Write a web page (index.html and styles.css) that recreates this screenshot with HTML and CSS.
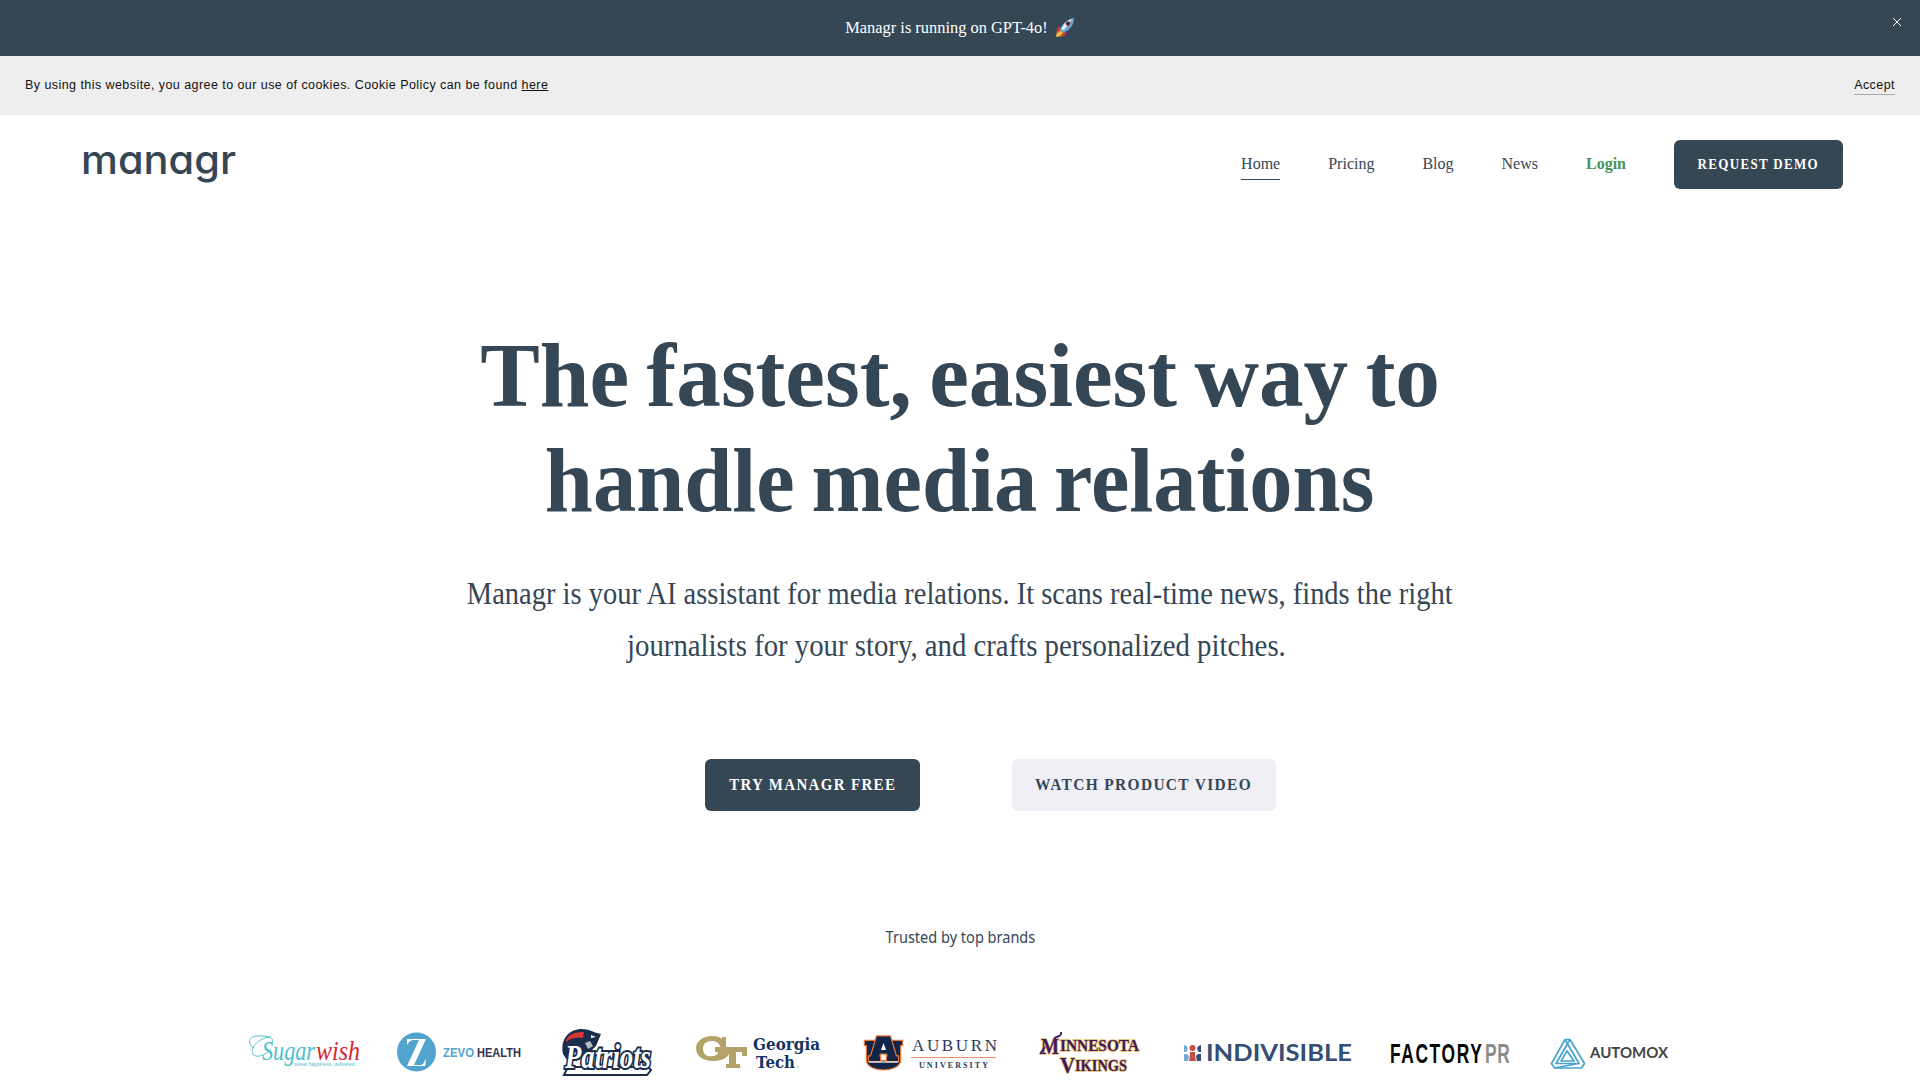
FILE: index.html
```html
<!DOCTYPE html>
<html lang="en">
<head>
<meta charset="utf-8">
<title>Managr</title>
<link rel="stylesheet" href="styles.css">
</head>
<body>
<div class="announce"><span class="announce-text">Managr is running on GPT-4o!</span>
  <svg class="rocket" width="20" height="20" viewBox="0 0 20 20"><path d="M5 8 1 11l4 1zM9 14l-1 5 4-4z" fill="#d8352a"/><path d="M1 19l1-5 3-2 3 3-2 3z" fill="#f7c23c"/><path d="M1 14l3-3 2 1-3 3zM5 18l3-4 1 2-2 3z" fill="#e5482d"/><path d="M5 12C7 6 12 1 19 0c0 7-4 12-11 15z" fill="#6fa5cc"/><path d="M6 11C9 5 13 2 17 1l-8 11z" fill="#e4edf2"/><circle cx="13" cy="5.500" r="2.200" fill="#8e2d27"/><circle cx="13" cy="5.500" r="1.200" fill="#26303a"/></svg>
  <svg class="close" width="10" height="10" viewBox="0 0 10 10"><path d="M1 1l8 8M9 1L1 9" stroke="#fff" stroke-width="1" fill="none"/></svg>
</div>
<div class="cookie"><span>By using this website, you agree to our use of cookies. Cookie Policy can be found <a class="here">here</a></span><a class="accept">Accept</a></div>
<header class="header">
  <svg class="logo" width="160" height="64" viewBox="80 132 160 64"><text class="logo-text" x="81" y="174" textLength="155" lengthAdjust="spacingAndGlyphs">managr</text></svg>
  <nav class="nav"><a class="link active">Home</a><a class="link">Pricing</a><a class="link">Blog</a><a class="link">News</a><a class="link login">Login</a><a class="btn demo"><span>REQUEST DEMO</span></a></nav>
</header>
<main>
  <h1><span class="l1">The fastest, easiest way to</span><span class="l2">handle media relations</span></h1>
  <p class="lead"><span class="p1">Managr is your AI assistant for media relations. It scans real-time news, finds the right</span><span class="p2">journalists for your story, and crafts personalized pitches.</span></p>
  <div class="actions"><a class="btn try"><span>TRY MANAGR FREE</span></a><a class="btn watch"><span>WATCH PRODUCT VIDEO</span></a></div>
  <p class="trusted"><span>Trusted by top brands</span></p>
  <div class="brands">
    <svg width="122" height="55" viewBox="244 1025 122 55"><path d="M272 1043c3-7-7-7-15-7-10 0-9 10-3 12M271 1037c-10 0-22 10-18 17 3 5 13 1 18-5" fill="none" stroke="#4fc0ca"/><text class="script teal" x="262" y="1060" font-size="28" textLength="53" lengthAdjust="spacingAndGlyphs">Sugar</text><text class="script red" x="316" y="1060" font-size="27" textLength="44" lengthAdjust="spacingAndGlyphs">wish</text><text class="sans teal" x="294" y="1065.500" font-size="5" textLength="62">sweet happiness, delivered.</text></svg>
    <svg width="130" height="55" viewBox="396 1025 130 55"><circle cx="416.500" cy="1052" r="19.500" fill="#51a4ce"/><path d="M407 1044v-5h19l-12 26h6c3 0 4-2 5-5h1l-1 6h-18l12-26h-5c-3 0-5 1-6 4z" fill="#fff"/><text class="sans bold" x="443" y="1056.500" font-size="12" textLength="31" lengthAdjust="spacingAndGlyphs" fill="#51a4ce">ZEVO</text><text class="sans bold" x="477" y="1056.500" font-size="12" textLength="44" lengthAdjust="spacingAndGlyphs" fill="#31324e">HEALTH</text></svg>
    <svg width="102" height="55" viewBox="556 1025 102 55"><path d="M563 1054c-3-15 6-25 19-25 7 0 10 3 19 5l-5 12-8 8-16-2-5 8z" fill="#1c2d4b"/><path d="M566 1040c3-6 9-8 18-8l-1 6c-8-1-13 0-17 4z" fill="#da3535"/><path d="M585 1043l5-2 3 5-5 3z" fill="#b8c0c7"/><path d="M591 1035l5 2-5 1z" fill="#fff"/><path d="M568 1067h80l3 3-4 5h-83z" fill="#fff" stroke="#1c2d4b" stroke-width="2"/><text class="patriots" x="565" y="1068" font-size="34" textLength="86" lengthAdjust="spacingAndGlyphs">Patriots</text></svg>
    <svg width="136" height="55" viewBox="688 1025 136 55"><path d="M722 1037h4v12h-5c-1-6-5-8-9-8-7 0-9 4-9 8 0 6 5 8 9 7 4 0 6-2 6-4h-3v-5h32v9h-5v-4h-6v12h4v4h-14v-4h3v-10c-3 5-9 7-16 7-10 0-17-5-17-13 0-7 7-12 16-12 5 0 8 1 10 3z" fill="#b3a369"/><circle cx="741" cy="1067" r=".6" fill="#b3a369"/><text class="slab" x="753" y="1050" font-size="17" textLength="67" lengthAdjust="spacingAndGlyphs">Georgia</text><text class="slab" x="756" y="1067.500" font-size="17" textLength="39" lengthAdjust="spacingAndGlyphs">Tech</text><circle cx="798" cy="1067" r=".6" fill="#153360"/></svg>
    <svg width="148" height="55" viewBox="854 1025 148 55"><g stroke="#e5783d" stroke-width="2.500" fill="#102548" paint-order="stroke"><path d="M865 1041h11v4h-2v16h19v-16h-2v-4h11v4h-2v16c-2 11-31 11-33 0v-16h-2z"/><path d="M877 1036.500h13l6 20h2v4.500h-11v-4.500h1l-1-3h-7l-1 3h1v4.500h-11v-4.500h2z"/></g><path d="M869 1062h29" stroke="#fff" stroke-width="1.200"/><path d="M883.500 1043l2.500 7h-5z" fill="#fff"/><text class="serif navy" x="912" y="1051" font-size="17" textLength="85">AUBURN</text><path d="M911 1057.500h85" stroke="#e9916c"/><text class="serif navy bold" x="919" y="1068" font-size="8" textLength="69">UNIVERSITY</text></svg>
    <svg width="112" height="55" viewBox="1032 1025 112 55"><g class="vikings"><text x="1041" y="1054" font-size="24" textLength="18" lengthAdjust="spacingAndGlyphs">M</text><text x="1060" y="1051" font-size="17" textLength="79" lengthAdjust="spacingAndGlyphs">INNESOTA</text><text x="1060" y="1073" font-size="24" textLength="15" lengthAdjust="spacingAndGlyphs">V</text><text x="1075" y="1071" font-size="17" textLength="52" lengthAdjust="spacingAndGlyphs">IKINGS</text></g><path d="M1054 1039c2-4 8-1 7-7M1040 1054l5-7" stroke="#43185f" stroke-width="2" fill="none"/></svg>
    <svg width="182" height="55" viewBox="1174 1025 182 55"><path d="M1184 1045c4 1 5 4 2 7h-2zM1184 1054h3l2 2-1 5h-4z" fill="#7ba8d2"/><circle cx="1192.500" cy="1048" r="3" fill="#ca4c46"/><path d="M1190 1052h5v3l1 6h-7l1-6z" fill="#ca4c46"/><path d="M1201 1045c-4 1-5 4-2 7h2zM1201 1054h-3l-2 2 1 5h4z" fill="#354f74"/><text class="lato" x="1206" y="1060.500" font-size="22" textLength="146" lengthAdjust="spacingAndGlyphs" fill="#354f74">INDIVISIBLE</text></svg>
    <svg width="128" height="55" viewBox="1386 1025 128 55"><text class="factory" transform="translate(1390 1063) scale(.62 1)" font-size="28" textLength="148" fill="#050505">FACTORY</text><text class="factory" transform="translate(1485 1063) scale(.62 1)" font-size="28" textLength="40" fill="#8c8c8c">PR</text></svg>
    <svg width="128" height="55" viewBox="1544 1025 128 55"><g fill="none" stroke="#48a5cd" stroke-width="1.700" stroke-linejoin="round"><path d="M1565 1039.500h5l14.500 24-3 4.500h-27l-3-4.500z"/><path d="M1570 1039.500l-14 24h20M1565 1039.500l14 24-25 4.500M1567 1051l-6 10h13z"/></g><text class="lato" x="1590" y="1058" font-size="14.500" textLength="78" lengthAdjust="spacingAndGlyphs" fill="#444">AUTOMOX</text></svg>
  </div>
</main>
</body>
</html>
```
FILE: styles.css
```css
*{box-sizing:border-box}
body{margin:0;width:1920px;height:1080px;overflow:hidden;background:#fff;color:#354655;font-family:"Liberation Serif",serif}
.announce{height:56px;background:#354655;color:#fff;display:flex;align-items:center;justify-content:center;gap:7px;position:relative;font-size:16.4px;line-height:20px}
.close{position:absolute;left:1892px;top:17px}
.cookie{height:59px;background:#eee;color:#111;display:flex;justify-content:space-between;align-items:flex-start;padding:20px 25px;font:12.5px/18px "Liberation Sans",sans-serif;letter-spacing:.44px}
.here{text-decoration:underline}
.accept{border-bottom:1px solid #aaa}
.header{height:98px;display:flex;align-items:center;justify-content:space-between;padding:0 77px 0 80px}
.logo-text{font:500 40px Inter,sans-serif;font-feature-settings:"cv11";fill:#354655}
.nav{display:flex;align-items:center;gap:48px;font-size:16px}
.link{line-height:30px;border-bottom:1px solid transparent}
.active{border-color:#354655}
.login{color:#439455;font-weight:bold}
.btn{display:flex;align-items:center;justify-content:center;border-radius:6px;font-weight:bold;background:#354655;color:#fff;white-space:nowrap}
.demo{width:169px;height:49px;font-size:14px;letter-spacing:1.4px}
.demo span{transform:scaleX(.93);padding-top:1px}
h1{margin:110px 0 0;font-size:91px;line-height:105px;word-spacing:-5px;display:flex;flex-direction:column;align-items:center;white-space:nowrap}
.l1{transform:scaleX(.981)}
.l2{transform:scaleX(.95)}
.lead{margin:35px 0 0;font-size:30.5px;line-height:52px;display:flex;flex-direction:column;align-items:center;white-space:nowrap}
.p1{transform:scaleX(.934)}
.p2{transform:scaleX(.943);padding-right:7px}
.actions{display:flex;gap:92px;margin:0 0 0 705px;padding-top:87px}
.actions .btn{height:52px;font-size:17px;letter-spacing:1.5px}
.try{width:215px}
.try span{transform:scaleX(.882)}
.watch span{transform:scaleX(.907)}
.actions .watch{width:264px;background:#f0eff5;color:#354655}
.trusted{margin:114px 0 0;text-align:center;font:16px/24px "Noto Sans",sans-serif}
.trusted span{display:inline-block;transform:scaleX(.908)}
.brands{display:flex;gap:30px;padding-left:244px;margin-top:76px}
.brands svg{flex:none;overflow:visible}
.script{font-family:"Liberation Serif",serif;font-style:italic}
.teal{fill:#4fc0ca}
.red{fill:#d5262f}
.sans{font-family:"Liberation Sans",sans-serif}
.bold{font-weight:bold}
.patriots{font-family:"Liberation Serif",serif;font-style:italic;font-weight:bold;fill:#fff;stroke:#1c2d4b;stroke-width:4px;paint-order:stroke}
.slab{font-family:"DejaVu Serif",serif;font-weight:bold;fill:#153360}
.serif{font-family:"Liberation Serif",serif}
.navy{fill:#283b5e}
.vikings{font-family:"Liberation Serif",serif;font-weight:bold;fill:#43185f;stroke:#e3bd65;stroke-width:1.6px;paint-order:stroke}
.lato{font-family:Lato,sans-serif;font-weight:bold}
.factory{font-family:"Liberation Sans",sans-serif;font-weight:bold}
```
